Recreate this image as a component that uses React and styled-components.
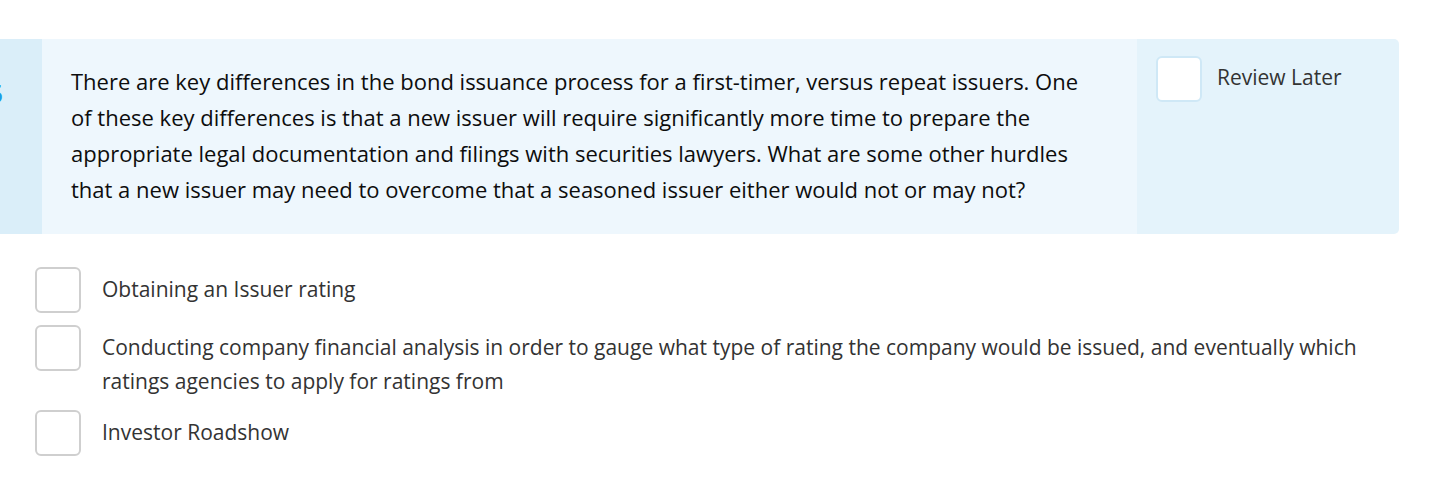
import React from 'react';
import styled, { createGlobalStyle } from 'styled-components';

const GlobalStyle = createGlobalStyle`
  body {
    margin: 0;
    background: #fff;
    font-family: "Open Sans", "Noto Sans", sans-serif;
  }
`;

const Page = styled.div`
  padding-top: 39px;
  width: 1438px;
`;

const Card = styled.div`
  display: flex;
  width: 1399px;
  min-height: 195px;
  border-radius: 0 5px 5px 0;
  overflow: hidden;
`;

const NumberCol = styled.div`
  width: 42px;
  flex-shrink: 0;
  background: #daeef9;
  overflow: hidden;
  position: relative;
`;

const Number = styled.span`
  position: absolute;
  right: 39px;
  top: 36px;
  font-size: 26px;
  font-weight: 600;
  color: #1b9ce6;
`;

const Question = styled.div`
  width: 1095px;
  flex-shrink: 0;
  box-sizing: border-box;
  padding: 24px 38px 26px 29px;
  background: #eef7fd;
  font-size: 22px;
  line-height: 36px;
  color: #0d0d0d;
`;

const Aside = styled.div`
  flex: 1;
  display: flex;
  align-items: flex-start;
  gap: 15px;
  padding: 17px 19px;
  background: #e4f3fb;
`;

const Box = styled.span`
  display: block;
  width: 46px;
  height: 46px;
  flex-shrink: 0;
  box-sizing: border-box;
  border: 2px solid ${({ light }) => (light ? '#cfe8f6' : '#cfcfcf')};
  border-radius: 6px;
  background: #fff;
`;

const AsideLabel = styled.span`
  font-size: 21px;
  line-height: 24px;
  padding-top: 9px;
  color: #333;
`;

const Options = styled.div`
  display: flex;
  flex-direction: column;
  gap: 12px;
  padding: 33px 0 0 35px;
`;

const Option = styled.label`
  display: flex;
  align-items: flex-start;
  gap: 21px;
`;

const OptionText = styled.span`
  font-size: 21px;
  line-height: 34px;
  padding-top: 5px;
  color: #333;
  max-width: 1300px;
`;

const options = [
  'Obtaining an Issuer rating',
  'Conducting company financial analysis in order to gauge what type of rating the company would be issued, and eventually which ratings agencies to apply for ratings from',
  'Investor Roadshow',
];

export default function App() {
  return (
    <Page>
      <GlobalStyle />
      <Card>
        <NumberCol>
          <Number>5</Number>
        </NumberCol>
        <Question>
          There are key differences in the bond issuance process for a first-timer, versus repeat issuers. One of these key differences is that a new issuer will require significantly more time to prepare the appropriate legal documentation and filings with securities lawyers. What are some other hurdles that a new issuer may need to overcome that a seasoned issuer either would not or may not?
        </Question>
        <Aside>
          <Box light />
          <AsideLabel>Review Later</AsideLabel>
        </Aside>
      </Card>
      <Options>
        {options.map((o) => (
          <Option key={o}>
            <Box />
            <OptionText>{o}</OptionText>
          </Option>
        ))}
      </Options>
    </Page>
  );
}
